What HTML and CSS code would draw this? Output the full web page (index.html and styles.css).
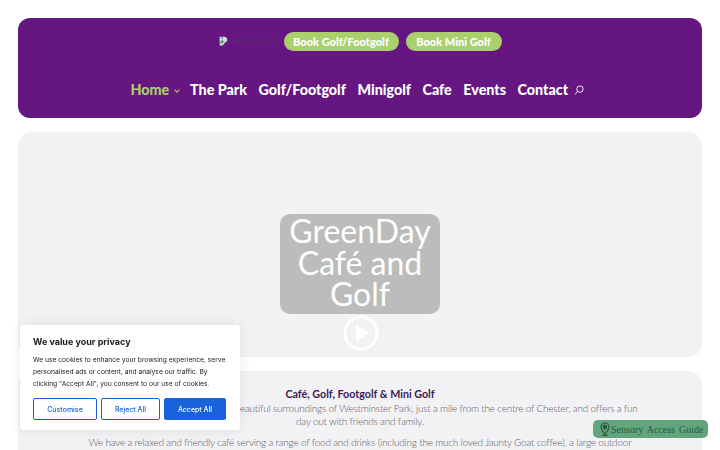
FILE: index.html
```html
<!DOCTYPE html>
<html lang="en">
<head>
  <meta charset="UTF-8" />
  <meta name="viewport" content="width=device-width, initial-scale=1.0"/>
  <title>GreenDay Café and Golf</title>
  <link rel="stylesheet" href="styles.css">
</head>
<body>
  <header class="cabecera">
    <div class="fila-top">
      <div class="logo-roto">
        <svg class="img-rota" width="10" height="10" viewBox="0 0 16 16">
          <path d="M1 1h9l3 3v4l-4 3-3 4H1z" fill="#d8d8e4"/>
          <path d="M2 9l3-3 3 3-3 3H2z" fill="#5a9a5a"/>
          <path d="M3 2h4v3H3z" fill="#7fa6e0"/>
        </svg>
        <span class="logo-alt">Green Day Logo</span>
      </div>
      <a class="boton-verde boton-golf">Book Golf/Footgolf</a>
      <a class="boton-verde boton-mini">Book Mini Golf</a>
    </div>
    <nav class="menu">
      <a class="activo">Home <span class="flecha"></span></a>
      <a>The Park</a>
      <a>Golf/Footgolf</a>
      <a>Minigolf</a>
      <a>Cafe</a>
      <a>Events</a>
      <a>Contact</a>
      <svg class="lupa" width="10" height="10" viewBox="0 0 11 11" fill="none" stroke="#fff" stroke-width="1">
        <circle cx="6.500" cy="4.500" r="3.500"/>
        <path d="M4 7L1 10.500"/>
      </svg>
    </nav>
  </header>

  <section class="hero">
    <h1 class="hero-titulo">GreenDay Café and Golf</h1>
    <svg class="play" width="36" height="36" viewBox="0 0 36 36">
      <circle cx="18" cy="18" r="16" fill="none" stroke="#fff" stroke-width="3"/>
      <path d="M13 9.500L26 18 13 26.500z" fill="#fff"/>
    </svg>
  </section>

  <section class="tarjeta">
    <h2>Café, Golf, Footgolf &amp; Mini Golf</h2>
    <p>GreenDay Café and Golf is set in the beautiful surroundings of Westminster Park, just a mile from the centre of Chester, and offers a fun day out with friends and family.</p>
    <p>We have a relaxed and friendly café serving a range of food and drinks (including the much loved Jaunty Goat coffee), a large outdoor seating area and plenty of free parking.</p>
  </section>

  <div class="cookies">
    <h3>We value your privacy</h3>
    <p>We use cookies to enhance your browsing experience, serve personalised ads or content, and analyse our traffic. By clicking "Accept All", you consent to our use of cookies.</p>
    <div class="cookies-botones">
      <button class="btn-borde btn-custom">Customise</button>
      <button class="btn-borde btn-reject">Reject All</button>
      <button class="btn-azul">Accept All</button>
    </div>
  </div>

  <a class="sensory">
    <svg width="10" height="14" viewBox="0 0 10 14" fill="none" stroke="#2a5a3c" stroke-width="1.200">
      <path d="M5 12.500C3 9.500 1 7.500 1 5a4 4 0 0 1 8 0c0 2.500-2 4.500-4 7.500z"/>
      <circle cx="5" cy="5" r="1.800" fill="#2a5a3c"/>
      <path d="M2 13.300h6"/>
    </svg>
    <span>Sensory Access Guide</span>
  </a>
</body>
</html>
```

FILE: styles.css
```css
html, body {
  height: 100%;
  overflow: hidden;
}

body {
  margin: 0;
  padding: 18px 18px 0;
  box-sizing: border-box;
  font-family: Lato, 'Liberation Sans', sans-serif;
  background-color: #fff;
}

.cabecera {
  height: 100px;
  box-sizing: border-box;
  padding-top: 14px;
  background-color: #651680;
  border-radius: 12px;
}

.fila-top {
  display: flex;
  justify-content: center;
  align-items: center;
  gap: 7px;
}

.logo-roto {
  display: flex;
  gap: 1px;
  width: 58px;
  height: 16px;
  overflow: hidden;
  align-self: flex-start;
  margin-top: 3px;
}

.img-rota {
  flex: none;
  margin-top: 1px;
}

.logo-alt {
  font-size: 7.200px;
  line-height: 12px;
  color: #54306a;
  white-space: nowrap;
}

.boton-verde {
  height: 19px;
  line-height: 19px;
  box-sizing: border-box;
  text-align: center;
  font-size: 11px;
  font-weight: 900;
  color: #fff;
  background-color: #a9d06d;
  border-radius: 10px;
}

.boton-golf {
  width: 115px;
}

.boton-mini {
  width: 96px;
}

.menu {
  display: flex;
  justify-content: center;
  align-items: center;
  gap: 11.500px;
  margin-top: 30px;
  padding-right: 6px;
  font-size: 14.300px;
  font-weight: 900;
  color: #fff;
}

.menu .activo {
  color: #a9d06d;
}

.flecha {
  display: inline-block;
  width: 3px;
  height: 3px;
  margin: 0 0 3px 2px;
  border-right: 1px solid #a9d06d;
  border-bottom: 1px solid #a9d06d;
  transform: rotate(45deg);
}

.lupa {
  margin-left: -6px;
}

.hero {
  height: 225px;
  box-sizing: border-box;
  margin-top: 14px;
  padding-top: 82px;
  display: flex;
  flex-direction: column;
  align-items: center;
  background-color: #f2f2f2;
  border-radius: 14px;
}

.hero-titulo {
  width: 160px;
  height: 100px;
  margin: 0;
  box-sizing: border-box;
  padding-top: 1px;
  font-size: 32px;
  line-height: 31.500px;
  font-weight: 400;
  text-align: center;
  color: #fff;
  background-color: #bcbcbc;
  border-radius: 10px;
}

.play {
  margin: 1px 0 0 2px;
}

.tarjeta {
  margin-top: 14px;
  height: 200px;
  box-sizing: border-box;
  padding: 15px 62px 0;
  text-align: center;
  background-color: #f2f2f4;
  border-radius: 14px;
}

.tarjeta h2 {
  margin: 0 0 1px;
  font-size: 10.700px;
  line-height: 15px;
  font-weight: 700;
  color: #3a1a55;
}

.tarjeta p {
  margin: 0 0 8.500px;
  font-size: 10px;
  line-height: 12.500px;
  letter-spacing: -0.220px;
  font-weight: 300;
  color: #5a5a68;
}

.cookies {
  position: fixed;
  left: 20px;
  top: 325px;
  width: 220px;
  height: 105px;
  box-sizing: border-box;
  padding: 11px 13px;
  background-color: #fff;
  border-radius: 4px;
  box-shadow: 0 0 14px rgba(0, 0, 0, 0.08);
  font-family: Inter, 'Liberation Sans', sans-serif;
}

.cookies h3 {
  margin: 0 0 6px;
  font-size: 9px;
  line-height: 12px;
  font-weight: 700;
  color: #212121;
}

.cookies p {
  margin: 0;
  font-size: 6.700px;
  line-height: 12px;
  color: #212121;
}

.cookies-botones {
  display: flex;
  gap: 4px;
  margin-top: 8px;
}

.cookies-botones button {
  width: 62px;
  height: 22px;
  padding: 0;
  font-family: inherit;
  font-size: 7px;
  font-weight: 500;
  border-radius: 2px;
}

.cookies-botones .btn-custom {
  width: 64px;
}

.cookies-botones .btn-reject {
  width: 59px;
}

.btn-borde {
  color: #1863dc;
  background-color: #fff;
  border: 1px solid #1863dc;
}

.btn-azul {
  color: #fff;
  background-color: #1863dc;
  border: 1px solid #1863dc;
}

.sensory {
  position: fixed;
  left: 593px;
  top: 420px;
  width: 115px;
  height: 18px;
  box-sizing: border-box;
  padding-left: 7px;
  display: flex;
  align-items: center;
  gap: 1px;
  font-family: 'Liberation Serif', serif;
  font-size: 10px;
  word-spacing: 1.500px;
  color: #2a5a3c;
  background-color: #62a57c;
  border-radius: 5px;
}
```
